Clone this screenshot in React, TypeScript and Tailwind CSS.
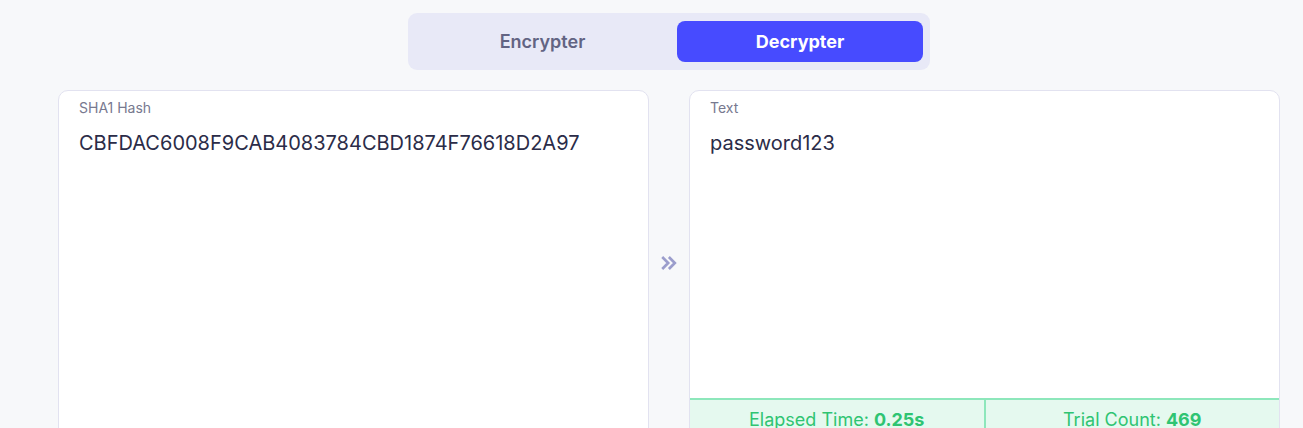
import React from "react";

export default function App() {
  return (
    <div className="min-h-[428px] w-full bg-[#f7f8fa] overflow-hidden" style={{ fontFamily: "Inter, 'Noto Sans', sans-serif" }}>
      <div className="ml-[58px] w-[1222px] pt-[13px]">
        <div className="flex justify-center">
          <div className="flex w-[522px] h-[57px] gap-2 rounded-[9px] bg-[#e8e9f7] py-2 pl-2 pr-[7px]">
            <button className="flex-1 rounded-[8px] text-[18px] font-semibold text-[#626483]">Encrypter</button>
            <button className="w-[246px] rounded-[8px] bg-[#474bff] text-[18px] font-bold text-white">Decrypter</button>
          </div>
        </div>
        <div className="mt-[20px] flex items-stretch gap-0">
          <div className="h-[360px] w-[591px] rounded-[10px] border border-[#e2e2f0] bg-white px-5 pt-[8px]">
            <div className="text-[14px] leading-[18px] text-[#77798f]">SHA1 Hash</div>
            <div className="mt-[14px] text-[20px] leading-[24px] text-[#2b2c48]">CBFDAC6008F9CAB4083784CBD1874F76618D2A97</div>
          </div>
          <div className="flex w-[40px] items-start justify-center pt-[163px]">
            <svg width="20" height="20" viewBox="0 0 24 24" fill="none" stroke="#9b9dcc" strokeWidth="3.2" strokeLinecap="square" strokeLinejoin="miter">
              <path d="M5 6l6 6-6 6" />
              <path d="M13 6l6 6-6 6" />
            </svg>
          </div>
          <div className="flex h-[360px] w-[591px] flex-col overflow-hidden rounded-[10px] border border-[#e2e2f0] bg-white">
            <div className="h-[307px] px-5 pt-[8px]">
              <div className="text-[14px] leading-[18px] text-[#77798f]">Text</div>
              <div className="mt-[14px] text-[20px] leading-[24px] text-[#2b2c48]">password123</div>
            </div>
            <div className="flex flex-1 border-t-2 border-[#8de7bb] bg-[#e5f9ef] text-[18px] text-[#2fc472]">
              <div className="flex flex-1 justify-center border-r-2 border-[#8de7bb] pt-[6px]">
                <span>Elapsed Time: <b className="font-bold">0.25s</b></span>
              </div>
              <div className="flex flex-1 justify-center pt-[6px]">
                <span>Trial Count: <b className="font-bold">469</b></span>
              </div>
            </div>
          </div>
        </div>
      </div>
    </div>
  );
}
